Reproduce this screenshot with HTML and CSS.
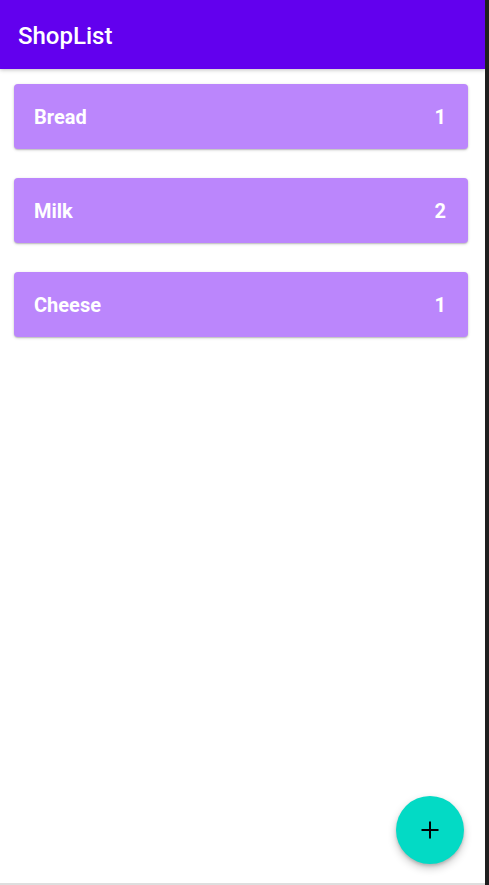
FILE: index.html
```html
<!DOCTYPE html>
<html>
<head>
<meta charset="utf-8">
<link rel="stylesheet" href="styles.css">
</head>
<body>
<div class="frame">
  <div class="screen">
    <header class="appbar"><h1 class="title">ShopList</h1></header>
    <main class="list">
      <div class="card"><span class="name">Bread</span><span class="qty">1</span></div>
      <div class="card"><span class="name">Milk</span><span class="qty">2</span></div>
      <div class="card"><span class="name">Cheese</span><span class="qty">1</span></div>
    </main>
    <button class="fab" aria-label="Add">
      <svg width="18" height="18" viewBox="0 0 18 18"><path d="M9 0.5v17M0.5 9h17" stroke="#000" stroke-width="2" fill="none"/></svg>
    </button>
  </div>
  <div class="edge"></div>
</div>
</body>
</html>
```

FILE: styles.css
```css
* { box-sizing: border-box; }
html, body { margin: 0; padding: 0; }
body { background: #fff; font-family: Roboto, "Noto Sans", sans-serif; }
.frame { display: flex; width: 489px; height: 885px; }
.screen {
  position: relative;
  width: 485px;
  height: 885px;
  background: #fff;
  border-bottom: 2px solid #dedede;
  overflow: hidden;
}
.edge { width: 4px; height: 885px; background: #1f1f1f; }
.appbar {
  height: 69px;
  background: #6200ee;
  display: flex;
  align-items: center;
  padding-left: 18px;
  box-shadow: 0 1px 4px rgba(0,0,0,0.25);
  position: relative;
  z-index: 1;
}
.title {
  margin: 0;
  color: #fff;
  font-size: 24px;
  font-weight: 500;
  letter-spacing: 0;
  padding-top: 2px;
}
.list {
  display: flex;
  flex-direction: column;
  gap: 29px;
  padding: 15px 17px 0 14px;
}
.card {
  height: 65px;
  background: #bb86fc;
  border-radius: 4px;
  box-shadow: 0 1px 3px rgba(0,0,0,0.22), 0 1px 1px rgba(0,0,0,0.1);
  display: flex;
  align-items: center;
  justify-content: space-between;
  padding: 0 22px 0 20px;
  color: #fff;
  font-size: 20px;
  font-weight: 700;
}
.fab {
  position: absolute;
  left: 396px;
  top: 796px;
  width: 68px;
  height: 68px;
  border-radius: 50%;
  border: none;
  background: #03dac5;
  display: flex;
  align-items: center;
  justify-content: center;
  padding: 0;
  box-shadow: 0 4px 8px rgba(0,0,0,0.22), 0 2px 3px rgba(0,0,0,0.15);
}
```
